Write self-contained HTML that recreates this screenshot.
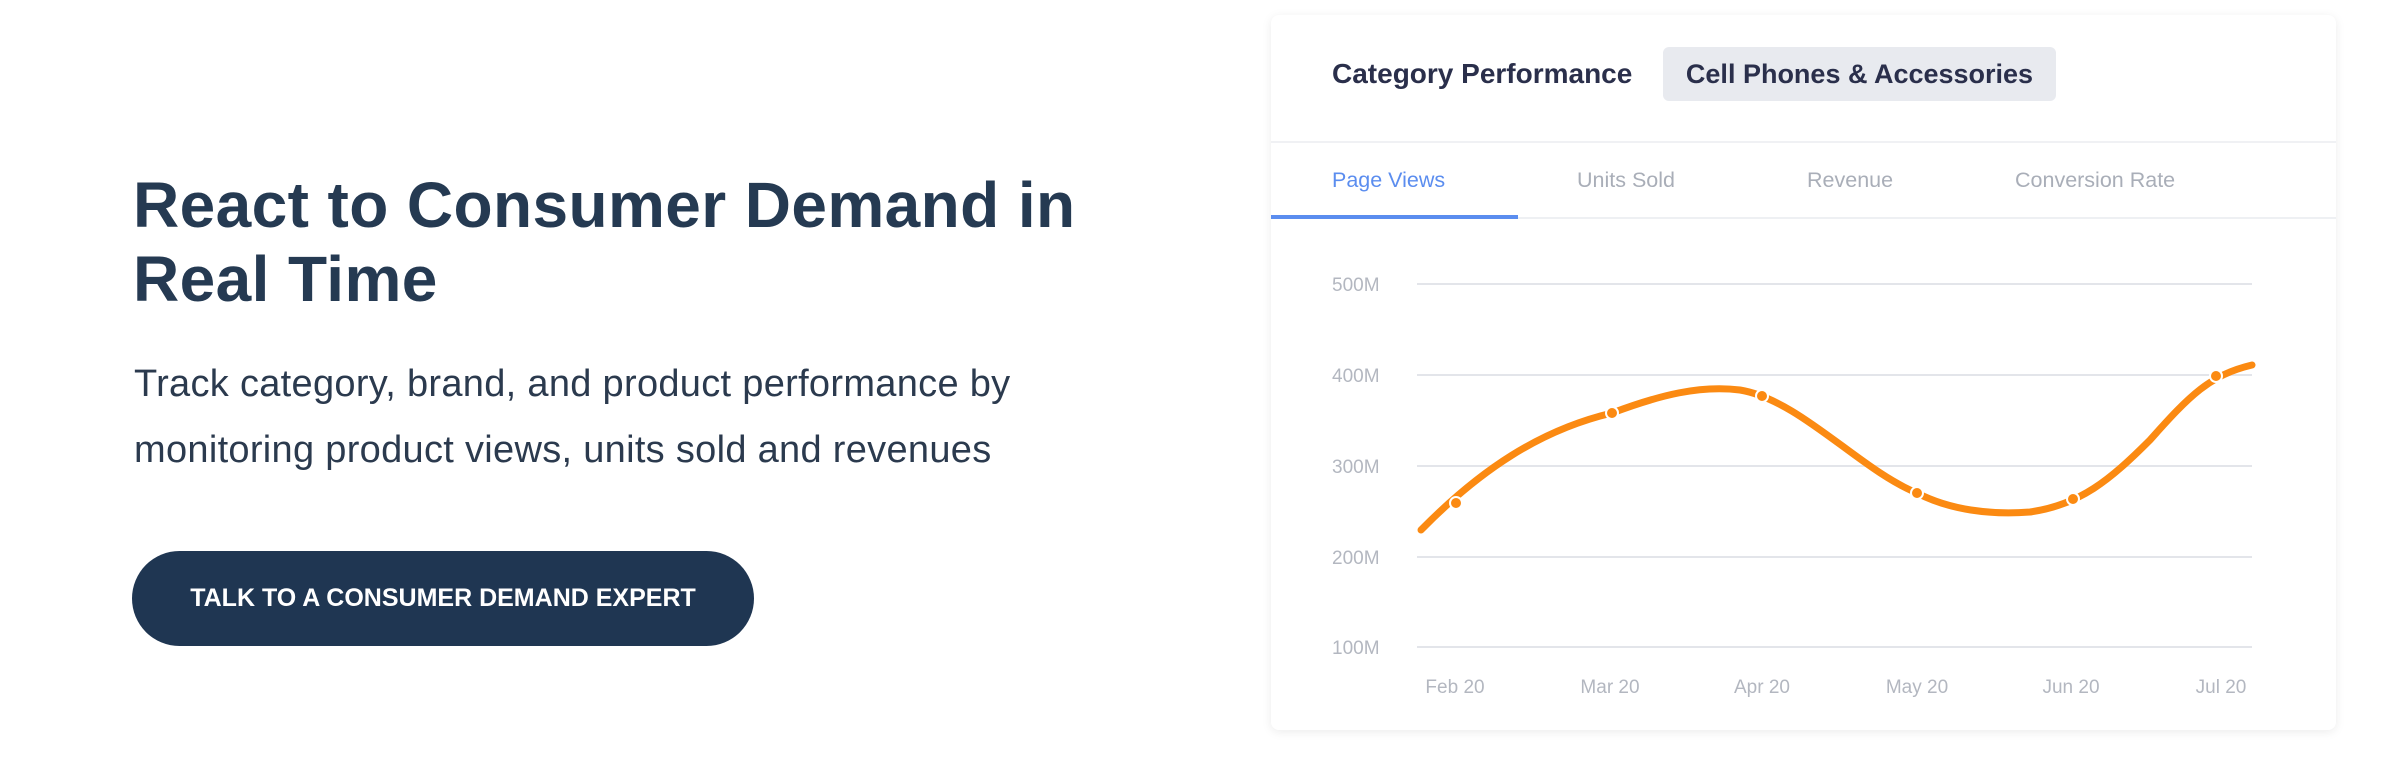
<!DOCTYPE html>
<html><head><meta charset="utf-8"><style>
body{margin:0;width:2402px;height:772px;background:#fff;position:relative;overflow:hidden;font-family:"Liberation Sans",sans-serif}
.abs{position:absolute;white-space:nowrap}
h1{position:absolute;left:133px;top:168px;margin:0;font-size:64px;line-height:74px;font-weight:bold;color:#253a52;letter-spacing:0.4px}
p{position:absolute;left:134px;top:351px;margin:0;font-size:38px;line-height:66px;color:#2b3a4e;letter-spacing:0.3px}
.btn{position:absolute;left:132px;top:551px;width:622px;height:95px;border-radius:48px;background:#1f3652;color:#fff;font-weight:bold;font-size:25px;display:flex;align-items:center;justify-content:center}
.card{position:absolute;left:1271px;top:15px;width:1065px;height:715px;background:#fff;border-radius:8px;box-shadow:0 2px 10px rgba(0,0,0,.08)}
</style></head><body>
<h1>React to Consumer Demand in<br>Real Time</h1>
<p>Track category, brand, and product performance by<br>monitoring product views, units sold and revenues</p>
<div class="btn">TALK TO A CONSUMER DEMAND EXPERT</div>
<div class="card"></div>
<div class="abs" style="left:1332px;top:58px;font-size:28px;font-weight:bold;color:#2a2f4b">Category Performance</div>
<div class="abs" style="left:1663px;top:47px;width:393px;height:54px;background:#e8eaef;border-radius:6px;font-size:27px;font-weight:bold;color:#2a2f4b;line-height:54px;text-align:center">Cell Phones &amp; Accessories</div>
<div class="abs" style="left:1271px;top:141px;width:1065px;height:2px;background:#f0f1f4"></div>
<div class="abs" style="left:1271px;top:217px;width:1065px;height:2px;background:#eef0f3"></div>
<div class="abs" style="left:1271px;top:215px;width:247px;height:4px;background:#5b8def"></div>
<div class="abs" style="left:1332px;top:168px;font-size:21.5px;color:#5b8def">Page Views</div>
<div class="abs" style="left:1577px;top:168px;font-size:21.5px;color:#a9aeb8">Units Sold</div>
<div class="abs" style="left:1807px;top:168px;font-size:21.5px;color:#a9aeb8">Revenue</div>
<div class="abs" style="left:2015px;top:168px;font-size:21.5px;color:#a9aeb8">Conversion Rate</div>
<svg class="abs" style="left:0;top:0" width="2402" height="772">
<g stroke="#e3e5ea" stroke-width="2">
<line x1="1417" y1="284" x2="2252" y2="284"/><line x1="1417" y1="375" x2="2252" y2="375"/><line x1="1417" y1="466" x2="2252" y2="466"/><line x1="1417" y1="557" x2="2252" y2="557"/><line x1="1417" y1="647" x2="2252" y2="647"/>
</g>
<g font-family="Liberation Sans" font-size="19" fill="#b3b7c0">
<text x="1332" y="291">500M</text><text x="1332" y="382">400M</text><text x="1332" y="473">300M</text><text x="1332" y="564">200M</text><text x="1332" y="654">100M</text>
<g text-anchor="middle"><text x="1455" y="693">Feb 20</text><text x="1610" y="693">Mar 20</text><text x="1762" y="693">Apr 20</text><text x="1917" y="693">May 20</text><text x="2071" y="693">Jun 20</text><text x="2221" y="693">Jul 20</text></g>
</g>
<path d="M1421,530 C1480,470 1540,430 1612,413 C1660,395 1700,385 1740,390 C1800,400 1860,470 1917,493 C1950,510 1990,515 2030,512 C2080,505 2110,480 2150,440 C2190,395 2210,375 2252,365" fill="none" stroke="#fb8a12" stroke-width="7" stroke-linecap="round"/>
<g fill="#fb8a12" stroke="#fff" stroke-width="2">
<circle cx="1456" cy="503" r="6"/><circle cx="1612" cy="413" r="6"/><circle cx="1762" cy="396" r="6"/><circle cx="1917" cy="493" r="6"/><circle cx="2073" cy="499" r="6"/><circle cx="2216" cy="376" r="6"/>
</g>
</svg>
</body></html>
